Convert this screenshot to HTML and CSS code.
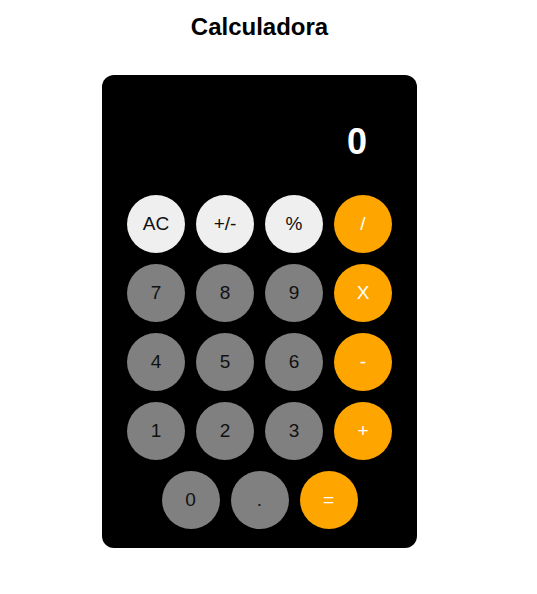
FILE: index.html
```html
<!DOCTYPE html>
<html lang="es">
<head>
<meta charset="utf-8">
<title>Calculadora</title>
<link rel="stylesheet" href="styles.css">
</head>
<body>
<h1 class="title">Calculadora</h1>
<div class="calc">
  <div class="display">0</div>
  <div class="keys">
    <button class="key light">AC</button>
    <button class="key light">+/-</button>
    <button class="key light">%</button>
    <button class="key op">/</button>
    <button class="key">7</button>
    <button class="key">8</button>
    <button class="key">9</button>
    <button class="key op">X</button>
    <button class="key">4</button>
    <button class="key">5</button>
    <button class="key">6</button>
    <button class="key op">-</button>
    <button class="key">1</button>
    <button class="key">2</button>
    <button class="key">3</button>
    <button class="key op">+</button>
    <button class="key">0</button>
    <button class="key">.</button>
    <button class="key op">=</button>
  </div>
</div>
</body>
</html>
```
FILE: styles.css
```css
body {
  margin: 0;
  width: 519px;
  padding-top: 13px;
  font-family: "Liberation Sans", Arial, sans-serif;
  background: #fff;
}
.title {
  margin: 0 0 34px;
  text-align: center;
  font-size: 24px;
  font-weight: bold;
  line-height: 28px;
}
.calc {
  width: 315px;
  margin: 0 auto;
  background: #000;
  border-radius: 12px;
  padding: 0 25px 19px;
  box-sizing: border-box;
}
.display {
  height: 120px;
  box-sizing: border-box;
  padding: 47px 25px 0 0;
  text-align: right;
  color: #fff;
  font-size: 36px;
  font-weight: bold;
  line-height: 40px;
}
.keys {
  display: flex;
  flex-wrap: wrap;
  justify-content: center;
  gap: 11px;
}
.key {
  width: 58px;
  height: 58px;
  border-radius: 50%;
  border: none;
  padding: 0;
  background: #808080;
  color: #111;
  font-family: "Liberation Sans", Arial, sans-serif;
  font-size: 19px;
}
.key.light {
  background: #efefef;
}
.key.op {
  background: #ffa500;
  color: #fff;
}
```
